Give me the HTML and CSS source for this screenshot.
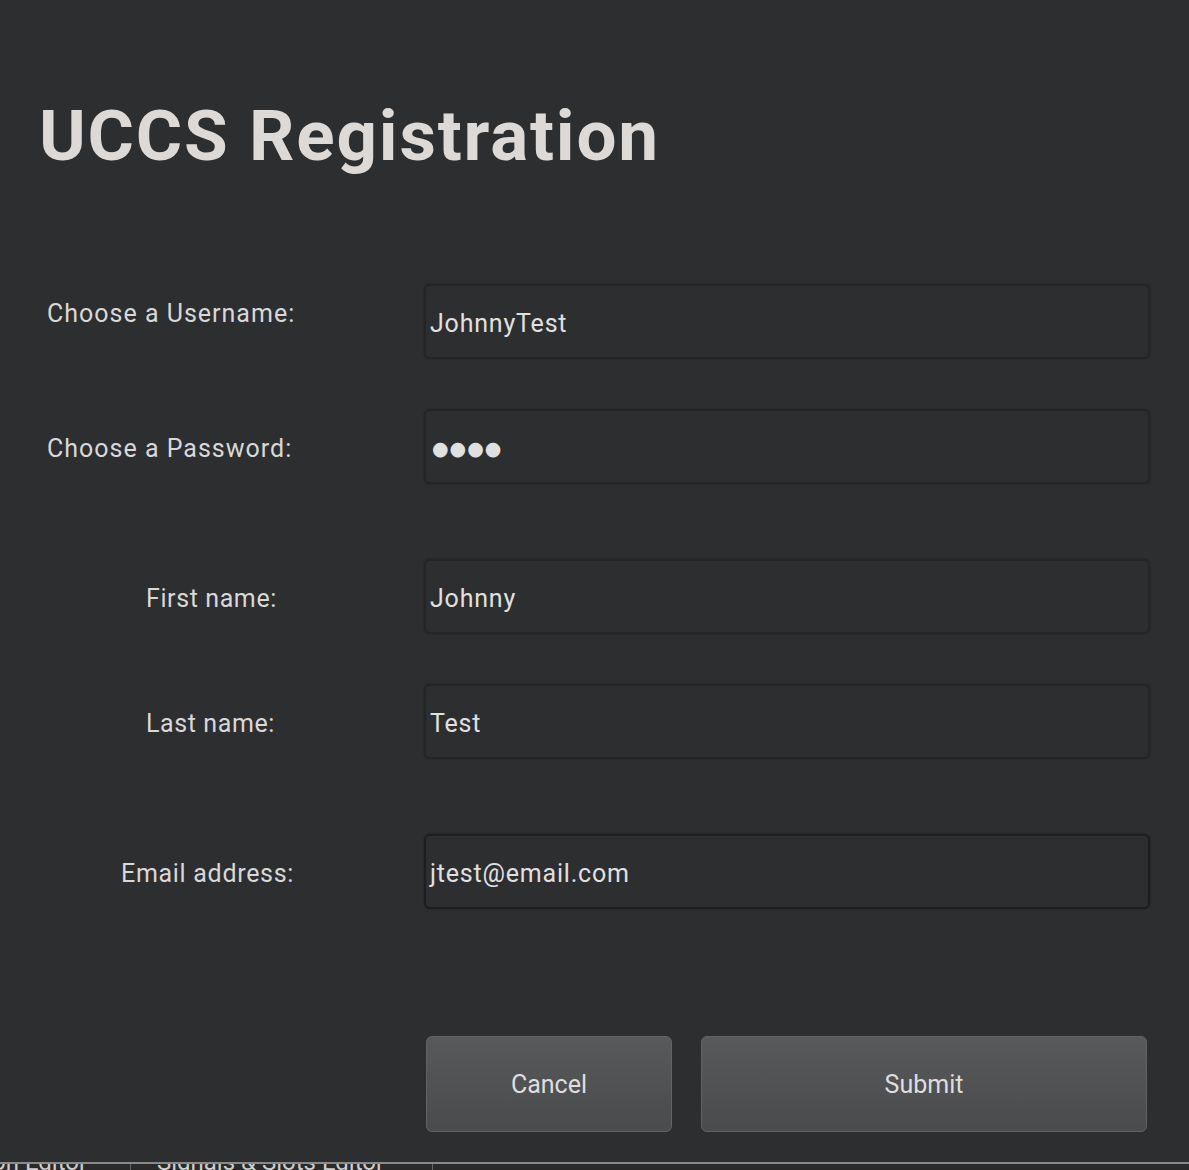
FILE: index.html
```html
<!DOCTYPE html>
<html>
<head>
<meta charset="utf-8">
<link rel="stylesheet" href="styles.css">
</head>
<body>
<div class="dialog">
  <h1 class="title">UCCS Registration</h1>
  <div class="form">
    <div class="row row-user">
      <label class="label lab-user">Choose a Username:</label>
      <div class="field">JohnnyTest</div>
    </div>
    <div class="row row-pass">
      <label class="label lab-pass">Choose a Password:</label>
      <div class="field dots">&#9679;&#9679;&#9679;&#9679;</div>
    </div>
    <div class="row row-first">
      <label class="label lab-first">First name:</label>
      <div class="field">Johnny</div>
    </div>
    <div class="row row-last">
      <label class="label lab-last">Last name:</label>
      <div class="field">Test</div>
    </div>
    <div class="row row-email">
      <label class="label lab-email">Email address:</label>
      <div class="field field-focus">jtest@email.com</div>
    </div>
  </div>
  <div class="buttons">
    <button class="btn btn-cancel">Cancel</button>
    <button class="btn btn-submit">Submit</button>
  </div>
</div>
<div class="statusbar">
  <span class="tab tab-first">on Editor</span>
  <span class="tab tab-second">Signals &amp; Slots Editor</span>
</div>
</body>
</html>
```

FILE: styles.css
```css
html, body {
  margin: 0;
  padding: 0;
  background: #2d2e30;
}
body {
  font-family: Roboto, "DejaVu Sans", sans-serif;
  color: #d9d9d9;
  height: 1170px;
  overflow: hidden;
}
.dialog {
  height: 1162px;
  box-sizing: border-box;
  padding-top: 96px;
}
.title {
  margin: 0 0 0 39px;
  font-size: 71px;
  line-height: 80px;
  font-weight: 700;
  color: #dcd9d6;
  letter-spacing: 1.8px;
}
.form {
  margin-top: 108px;
}
.row {
  display: grid;
  grid-template-columns: 424px 726px;
  height: 75px;
  align-items: center;
}
.row-pass { margin-top: 50px; }
.row-first { margin-top: 75px; }
.row-last { margin-top: 50px; }
.row-email { margin-top: 75px; }
.label {
  font-size: 25px;
  color: #d8d8d8;
  white-space: nowrap;
  letter-spacing: 1px;
}
.lab-user { padding-left: 47px; margin-top: -16px; }
.lab-pass { padding-left: 47px; margin-top: 4px; }
.lab-first { padding-left: 146px; margin-top: 4px; letter-spacing: 0.6px; }
.lab-last { padding-left: 146px; margin-top: 4px; letter-spacing: 0.6px; }
.lab-email { padding-left: 121px; margin-top: 4px; letter-spacing: 0.7px; }
.field {
  height: 75px;
  box-sizing: border-box;
  border: 2px solid #242527;
  border-radius: 6px;
  background: #2d2e30;
  box-shadow: 0 0 2px rgba(0,0,0,0.35);
  display: flex;
  align-items: center;
  padding-left: 4px;
  padding-top: 4px;
  font-size: 25px;
  color: #e0e0e0;
  white-space: nowrap;
  letter-spacing: 0.8px;
}
.field-focus {
  border-color: #1d1e20;
}
.dots {
  font-size: 19px;
  letter-spacing: 1px;
  padding-left: 6px;
}
.buttons {
  display: flex;
  margin: 127px 0 0 426px;
  gap: 29px;
}
.btn {
  height: 96px;
  border: 1px solid #626365;
  border-radius: 6px;
  background: linear-gradient(#58595b, #4a4b4d);
  color: #dedede;
  font-family: Roboto, "DejaVu Sans", sans-serif;
  font-size: 25px;
  padding: 0;
}
.btn-cancel { width: 246px; }
.btn-submit { width: 446px; }
.statusbar {
  height: 8px;
  border-top: 2px solid #8a8a8a;
  background: #2a2a2b;
  overflow: hidden;
  display: flex;
  box-sizing: border-box;
}
.tab {
  font-size: 24px;
  line-height: 24px;
  margin-top: -14px;
  color: #cfcfcf;
  border-right: 1px solid #666;
  white-space: nowrap;
}
.tab-first { width: 138px; margin-left: -8px; }
.tab-second { padding-left: 26px; width: 275px; }
```
